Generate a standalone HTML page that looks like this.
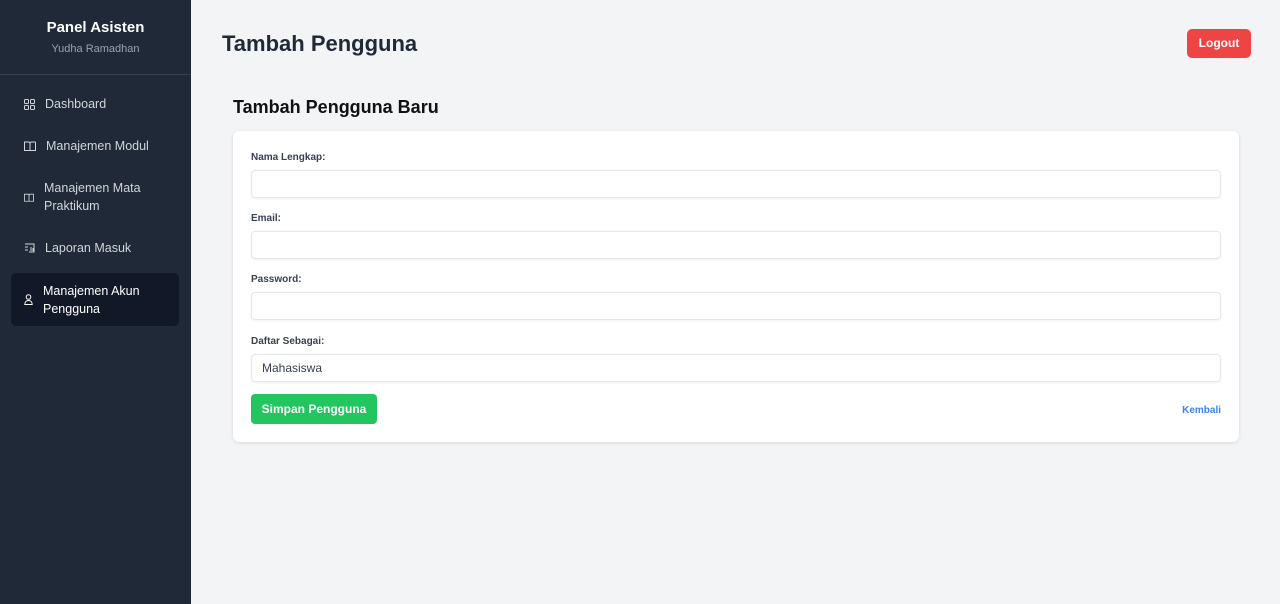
<!DOCTYPE html>
<html><head><style>
*{box-sizing:border-box;margin:0;padding:0}
body{width:1280px;height:604px;font-family:"Liberation Sans",sans-serif;background:#f3f4f6;position:relative;overflow:hidden}
.side{position:absolute;left:0;top:0;width:191px;height:604px;background:#1f2937;color:#fff}
.side h1{font-size:15px;font-weight:bold;text-align:center;margin-top:19px}
.side .sub{font-size:11px;color:#9ca3af;text-align:center;margin-top:7px}
.side hr{border:0;border-top:1px solid #374151;margin-top:19px}
.item{position:absolute;left:11px;width:168px;font-size:12.5px;color:#d1d5db;display:flex;align-items:center;line-height:18px}
.item svg{margin:0 10px 0 13px;flex:none}
.active{background:#111827;border-radius:5px;color:#fff}
.top{position:absolute;left:222px;top:31px;font-size:22px;font-weight:bold;color:#1f2937}
.logout{position:absolute;left:1187px;top:29px;width:64px;height:29px;background:#ef4444;color:#fff;font-size:12px;font-weight:bold;border-radius:5px;text-align:center;line-height:29px}
.h2{position:absolute;left:233px;top:97px;font-size:18px;font-weight:bold;color:#111}
.card{position:absolute;left:233px;top:131px;width:1006px;height:311px;background:#fff;border-radius:6px;box-shadow:0 1px 3px rgba(0,0,0,.12)}
.lbl{position:absolute;left:18px;font-size:10px;font-weight:bold;color:#374151}
.inp{position:absolute;left:18px;width:970px;height:28px;border:1px solid #e5e7eb;border-radius:4px;box-shadow:0 1px 2px rgba(0,0,0,.06);font-size:12px;color:#374151;padding-left:10px;line-height:26px}
.btn{position:absolute;left:18px;top:263px;width:126px;height:30px;background:#22c55e;color:#fff;font-size:12px;font-weight:bold;border-radius:4px;text-align:center;line-height:30px}
.back{position:absolute;right:18px;top:274px;font-size:10px;font-weight:bold;color:#3b82f6}
</style></head><body>
<div class="side">
<h1>Panel Asisten</h1><div class="sub">Yudha Ramadhan</div><hr>
<div class="item" style="top:95px;height:18px"><svg width="11" height="11" viewBox="0 0 11 11" fill="none" stroke="#d1d5db"><rect x=".5" y=".5" width="4" height="4" rx="1"/><rect x="6.5" y=".5" width="4" height="4" rx="1"/><rect x=".5" y="6.5" width="4" height="4" rx="1"/><rect x="6.5" y="6.5" width="4" height="4" rx="1"/></svg>Dashboard</div>
<div class="item" style="top:137px;height:18px"><svg width="12" height="10" viewBox="0 0 12 10" fill="none" stroke="#d1d5db"><path d="M.5 1h4c1 0 1.5.5 1.5 1.5V9.5H1.5 .5zM11.5 1h-4C6.5 1 6 1.5 6 2.5"/><path d="M11.5 1v8.5H6"/></svg>Manajemen Modul</div>
<div class="item" style="top:179px;height:36px"><svg width="10" height="9" viewBox="0 0 12 10" fill="none" stroke="#d1d5db"><path d="M.5 1h4c1 0 1.5.5 1.5 1.5V9.5H.5zM11.5 1h-4C6.5 1 6 1.5 6 2.5M11.5 1v8.5H6"/></svg>Manajemen Mata<br>Praktikum</div>
<div class="item" style="top:239px;height:18px"><svg width="11" height="10" viewBox="0 0 11 10" fill="none" stroke="#d1d5db"><path d="M1 1h9v8H5M1 4h3M1 7h3M7 4v4M9 5v3"/></svg>Laporan Masuk</div>
<div class="item active" style="top:273px;height:53px"><svg width="9" height="11" viewBox="0 0 9 11" fill="none" stroke="#fff"><circle cx="4.5" cy="3" r="2.3"/><path d="M.8 10.5c0-2.5 1.5-4 3.7-4s3.7 1.5 3.7 4z"/></svg>Manajemen Akun<br>Pengguna</div>
</div>
<div class="top">Tambah Pengguna</div>
<div class="logout">Logout</div>
<div class="h2">Tambah Pengguna Baru</div>
<div class="card">
<div class="lbl" style="top:21px">Nama Lengkap:</div><div class="inp" style="top:39px"></div>
<div class="lbl" style="top:82px">Email:</div><div class="inp" style="top:100px"></div>
<div class="lbl" style="top:143px">Password:</div><div class="inp" style="top:161px"></div>
<div class="lbl" style="top:205px">Daftar Sebagai:</div><div class="inp" style="top:223px">Mahasiswa</div>
<div class="btn">Simpan Pengguna</div>
<div class="back">Kembali</div>
</div>
</body></html>
